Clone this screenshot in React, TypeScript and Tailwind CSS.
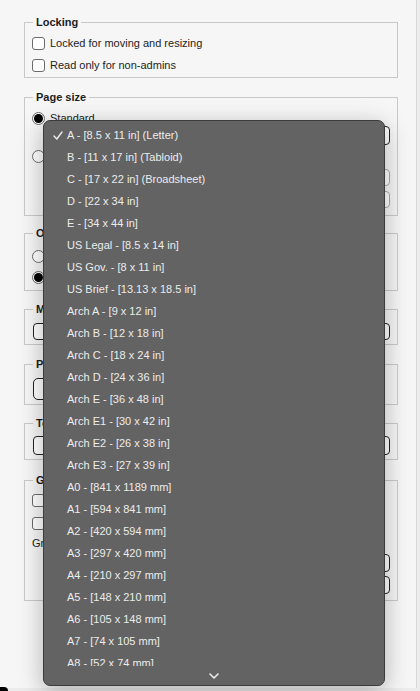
import React from 'react';

const sizes = [
  'A - [8.5 x 11 in] (Letter)',
  'B - [11 x 17 in] (Tabloid)',
  'C - [17 x 22 in] (Broadsheet)',
  'D - [22 x 34 in]',
  'E - [34 x 44 in]',
  'US Legal - [8.5 x 14 in]',
  'US Gov. - [8 x 11 in]',
  'US Brief - [13.13 x 18.5 in]',
  'Arch A - [9 x 12 in]',
  'Arch B - [12 x 18 in]',
  'Arch C - [18 x 24 in]',
  'Arch D - [24 x 36 in]',
  'Arch E - [36 x 48 in]',
  'Arch E1 - [30 x 42 in]',
  'Arch E2 - [26 x 38 in]',
  'Arch E3 - [27 x 39 in]',
  'A0 - [841 x 1189 mm]',
  'A1 - [594 x 841 mm]',
  'A2 - [420 x 594 mm]',
  'A3 - [297 x 420 mm]',
  'A4 - [210 x 297 mm]',
  'A5 - [148 x 210 mm]',
  'A6 - [105 x 148 mm]',
  'A7 - [74 x 105 mm]',
  'A8 - [52 x 74 mm]',
];

const Box: React.FC<{ title: string; className?: string; children: React.ReactNode }> = ({ title, className, children }) => (
  <fieldset className={`border border-[#c9c9c9] pl-[7px] pr-[7px] ${className ?? ''}`}>
    <legend className="px-[3px] ml-[1px] text-[11px] leading-[14px] font-bold text-[#1d1d1d]">{title}</legend>
    {children}
  </fieldset>
);

const Check = ({ label }: { label: string }) => (
  <label className="flex items-center h-[22px] gap-[5px]">
    <span className="w-[13px] h-[13px] rounded-[3px] border border-[#6b6b6b] bg-white" />
    <span>{label}</span>
  </label>
);

const Radio = ({ label, on }: { label: string; on?: boolean }) => (
  <label className="flex items-center h-[20px] gap-[5px]">
    <span className="w-[13px] h-[13px] rounded-full border border-[#6b6b6b] bg-white flex items-center justify-center">
      {on && <span className="w-[9px] h-[9px] rounded-full bg-black" />}
    </span>
    <span>{label}</span>
  </label>
);

const Field = ({ className }: { className: string }) => (
  <div className={`rounded-[4px] border border-[#222] bg-white ${className}`} />
);

export default function App() {
  return (
    <div
      className="relative w-[420px] h-[691px] overflow-hidden bg-[#ececec] text-[11px] text-[#1d1d1d]"
      style={{ fontFamily: '"Liberation Sans", Arial, sans-serif' }}
    >
      <div className="w-[417px] h-[688px] bg-[#f6f6f6] border-r border-[#d8d8d8] pl-[24px] pr-[18px] pt-[15px] flex flex-col">
        <Box title="Locking" className="h-[63px]">
          <div className="pt-[3px]">
            <Check label="Locked for moving and resizing" />
            <Check label="Read only for non-admins" />
          </div>
        </Box>

        <Box title="Page size" className="mt-[12px] h-[126px] pt-[4px]">
          <Radio label="Standard" on />
          <div className="flex justify-end -mt-[2px]">
            <Field className="w-[270px] h-[19px]" />
          </div>
          <div className="mt-[1px]">
            <Radio label="Custom" />
          </div>
          <div className="flex flex-col items-end gap-[5px] mt-[3px]">
            <Field className="w-[220px] h-[17px] !border-[#aaa]" />
            <Field className="w-[220px] h-[17px] !border-[#aaa]" />
          </div>
        </Box>

        <Box title="Orientation" className="mt-[10px] h-[65px] pt-[6px]">
          <Radio label="Portrait" />
          <div className="mt-[1px]">
            <Radio label="Landscape" on />
          </div>
        </Box>

        <Box title="Margins" className="mt-[11px] h-[43px] pt-[7px]">
          <Field className="h-[17px] ml-[1px]" />
        </Box>

        <Box title="Page background" className="mt-[12px] h-[48px] pt-[7px]">
          <Field className="w-[90px] h-[22px] ml-[1px] rounded-[5px]" />
        </Box>

        <Box title="Template" className="mt-[11px] h-[44px] pt-[6px]">
          <Field className="h-[19px] ml-[1px]" />
        </Box>

        <Box title="Grid" className="mt-[13px] h-[128px] pt-[2px]">
          <Check label="Show grid" />
          <div className="mt-[1px]">
            <Check label="Snap to grid" />
          </div>
          <div className="mt-[2px] h-[14px] leading-[14px]">Grid size</div>
          <div className="flex flex-col items-end gap-[4px] mt-[4px]">
            <Field className="w-[200px] h-[18px]" />
            <Field className="w-[200px] h-[18px]" />
          </div>
        </Box>
      </div>
      <div className="absolute left-0 bottom-0 w-[8px] h-[4px] bg-black rounded-tr-[6px]" />

      <div className="absolute left-[43px] top-[120px] w-[342px] h-[566px] rounded-[7px] border border-[#3c3c3c] bg-[#636363] shadow-[0_6px_24px_rgba(0,0,0,0.28)] flex flex-col overflow-hidden">
        <div className="h-[545px] overflow-hidden pt-[3px]">
          {sizes.map((s, i) => (
            <div key={s} className="relative h-[22px] flex items-center pl-[23px] text-[11px] text-[#ececec]">
              {i === 0 && (
                <svg className="absolute left-[9px] top-[7px]" width="10" height="9" viewBox="0 0 10 9" fill="none">
                  <path d="M1 5 L3.8 8 L9 1" stroke="#ececec" strokeWidth="1.4" strokeLinecap="round" strokeLinejoin="round" />
                </svg>
              )}
              {s}
            </div>
          ))}
        </div>
        <div className="flex-1 flex items-center justify-center">
          <svg width="10" height="6" viewBox="0 0 10 6" fill="none">
            <path d="M1 1 L5 5 L9 1" stroke="#f2f2f2" strokeWidth="1.5" strokeLinecap="round" strokeLinejoin="round" />
          </svg>
        </div>
      </div>
    </div>
  );
}
